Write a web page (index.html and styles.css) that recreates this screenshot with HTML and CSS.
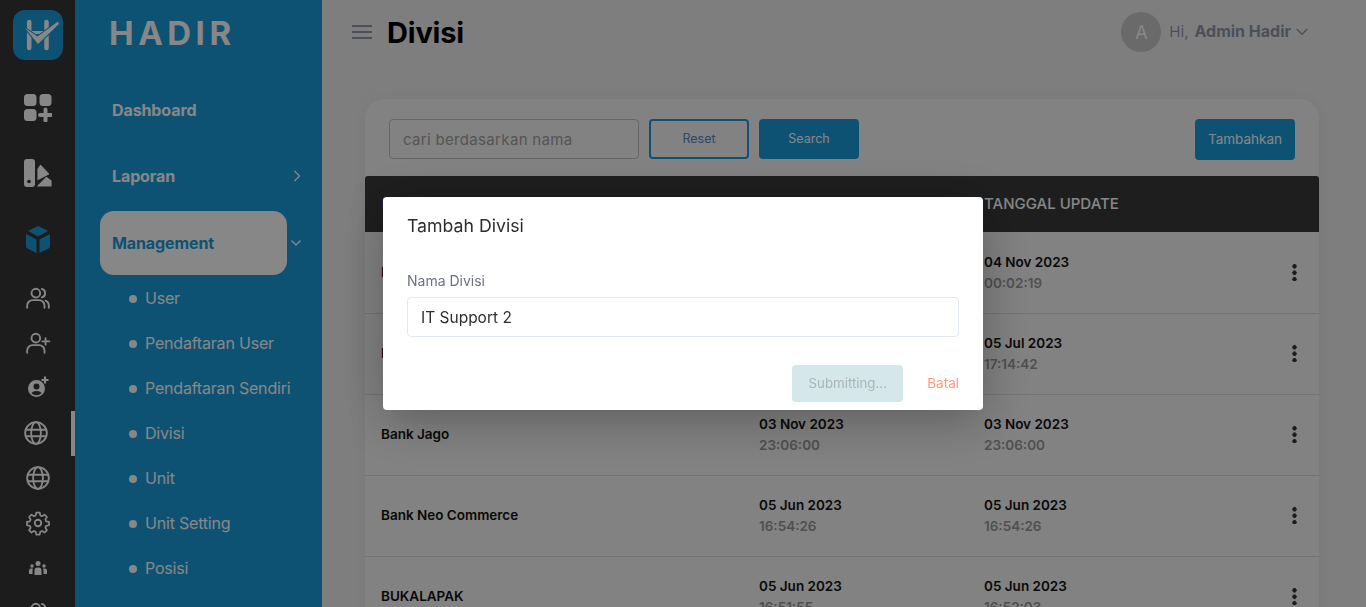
FILE: index.html
```html
<!DOCTYPE html>
<html lang="id">
<head>
<meta charset="utf-8">
<title>Divisi</title>
<link rel="stylesheet" href="styles.css">
</head>
<body>
<div class="app">
  <nav class="rail">
    <div class="rail-logo">
      <svg viewBox="0 0 50 50" width="50" height="50"><rect width="50" height="50" rx="12" fill="#1a9bd9"/><path d="M16.200 12v26M33.500 12v26" stroke="#fff" stroke-width="4.500" stroke-linecap="round" fill="none"/><path d="M17 22.500h16" stroke="#fff" stroke-width="3" fill="none"/><path d="M12 18l12.500 8.500L45 11.500l1 2.500L25 34z" fill="#fff" stroke="#1a9bd9" stroke-width="2" stroke-linejoin="round" paint-order="stroke"/></svg>
    </div>
    <a class="rail-item rail-big">
      <svg viewBox="0 0 28 28" width="28" height="28" fill="#fff"><rect x="0" y="0" width="12.500" height="12" rx="3.500"/><rect x="15.500" y="0" width="12" height="12" rx="3.500"/><rect x="0" y="15" width="12.500" height="12" rx="3.500"/><path d="M21.500 15.500v11M16 21h11" stroke="#fff" stroke-width="4" stroke-linecap="round"/></svg>
    </a>
    <a class="rail-item rail-big">
      <svg viewBox="0 0 28 28" width="28" height="28" fill="#fff"><path d="M3 0h5a3 3 0 0 1 3 3v22a3 3 0 0 1-3 3H3a3 3 0 0 1-3-3V3a3 3 0 0 1 3-3z"/><circle cx="5" cy="22.500" r="1.800" fill="#353535"/><path d="M14 10l2.500-3.500 8 8.500L14 20.500z" stroke="#fff" stroke-width="1.200" stroke-linejoin="round"/><path d="M14 27l8.500-8.500 4.500 3.500v5z" stroke="#fff" stroke-width="1.200" stroke-linejoin="round"/></svg>
    </a>
    <a class="rail-item rail-big">
      <svg viewBox="0 0 26 28" width="26" height="28" fill="#1a9bd9"><path d="M13 0l10 5-10 5.500L3 5z"/><path d="M1 8l10.500 5.500V27L2.500 22.500Q1 21.700 1 20z"/><path d="M25 8L14.500 13.500V27l9-4.500Q25 21.700 25 20z"/></svg>
    </a>
    <a class="rail-item rail-row">
      <svg class="ln" viewBox="0 0 24 24" width="26" height="26"><circle cx="10" cy="7.500" r="4"/><path d="M2 21v-2a5 5 0 0 1 5-5h6a5 5 0 0 1 5 5v2"/><path d="M15.500 3.600a4 4 0 0 1 0 7.800"/><path d="M22 21v-2a5 5 0 0 0-3-4.500"/></svg>
    </a>
    <a class="rail-item rail-row">
      <svg class="ln" viewBox="0 0 24 24" width="26" height="26"><circle cx="10" cy="7.500" r="4"/><path d="M2 21v-2a5 5 0 0 1 5-5h6a5 5 0 0 1 5 5v2"/><path d="M19 7.500v6M16 10.500h6.500"/></svg>
    </a>
    <a class="rail-item rail-row">
      <svg viewBox="0 0 24 24" width="24" height="24" fill="#fff"><path fill-rule="evenodd" d="M10.500 4a8.500 8.500 0 1 1 0 17 8.500 8.500 0 0 1 0-17zm0 3.500a3 3 0 1 0 0 6 3 3 0 0 0 0-6zm0 7.500c-2.300 0-4 .8-5 2a6.500 6.500 0 0 0 10 0c-1-1.200-2.700-2-5-2z"/><path d="M19 0.500v7M15.500 4h7" stroke="#fff" stroke-width="2.200"/></svg>
    </a>
    <a class="rail-item rail-row rail-active">
      <svg class="ln" viewBox="0 0 24 24" width="26" height="26"><circle cx="12" cy="12" r="10"/><ellipse cx="12" cy="12" rx="4.500" ry="10"/><path d="M2.500 9h19M2.500 15h19"/></svg>
    </a>
    <a class="rail-item rail-row">
      <svg class="ln" viewBox="0 0 24 24" width="26" height="26"><circle cx="12" cy="12" r="10"/><ellipse cx="12" cy="12" rx="4.500" ry="10"/><path d="M2.500 9h19M2.500 15h19"/></svg>
    </a>
    <a class="rail-item rail-row">
      <svg class="ln" viewBox="0 0 24 24" width="26" height="26"><circle cx="12" cy="12" r="3"/><path d="M10.300 2.500h3.400l.6 2.900 1.800.8 2.500-1.600 2.400 2.400-1.600 2.500.8 1.800 2.900.6v3.400l-2.900.6-.8 1.800 1.600 2.500-2.400 2.400-2.500-1.600-1.800.8-.6 2.900h-3.400l-.6-2.900-1.800-.8-2.500 1.600-2.400-2.400 1.600-2.500-.8-1.800-2.900-.6v-3.400l2.900-.6.8-1.800-1.600-2.500 2.400-2.400 2.500 1.600 1.800-.8z" transform="translate(12 12) scale(.92) translate(-12 -13)"/></svg>
    </a>
    <a class="rail-item rail-row">
      <svg viewBox="0 0 18 14" width="18" height="14" fill="#fff"><circle cx="9" cy="2.500" r="2.500"/><circle cx="3" cy="5" r="1.700"/><circle cx="15" cy="5" r="1.700"/><path d="M5.500 14V9.500a3 3 0 0 1 3-3h1a3 3 0 0 1 3 3V14z"/><path d="M0 13V9.500A2 2 0 0 1 2 7.500h2a4 4 0 0 0-.5 2V13zM18 13V9.500a2 2 0 0 0-2-2h-2a4 4 0 0 1 .5 2V13z"/></svg>
    </a>
    <a class="rail-item rail-row">
      <svg class="ln" viewBox="0 0 24 24" width="26" height="26"><circle cx="10" cy="7.500" r="4"/><path d="M2 21v-2a5 5 0 0 1 5-5h6a5 5 0 0 1 5 5v2"/><path d="M15.500 3.600a4 4 0 0 1 0 7.800"/></svg>
    </a>
    <span class="rail-thumb"></span>
  </nav>

  <aside class="side">
    <div class="brand">HADIR</div>
    <ul class="menu">
      <li class="menu-item">Dashboard</li>
      <li class="menu-item">Laporan
        <svg class="chev" viewBox="0 0 10 14" width="10" height="14"><path d="M2.500 2l5 5-5 5"/></svg>
      </li>
      <li class="menu-item menu-open">
        <span class="pill">Management</span>
        <svg class="chev" viewBox="0 0 12 10" width="12" height="10"><path d="M1.500 2.500l4.500 4.500 4.500-4.500"/></svg>
      </li>
    </ul>
    <ul class="sub">
      <li>User</li>
      <li>Pendaftaran User</li>
      <li>Pendaftaran Sendiri</li>
      <li>Divisi</li>
      <li>Unit</li>
      <li>Unit Setting</li>
      <li>Posisi</li>
    </ul>
  </aside>

  <main class="main">
    <header class="top">
      <button class="burger" aria-label="menu"><span></span><span></span><span></span></button>
      <h1 class="title">Divisi</h1>
      <div class="user">
        <span class="avatar">A</span>
        <span class="hi">Hi,</span>
        <strong class="uname">Admin Hadir</strong>
        <svg class="uchev" viewBox="0 0 12 8" width="12" height="8"><path d="M.7 1l5.300 5.300L11.300 1"/></svg>
      </div>
    </header>

    <section class="card">
      <div class="tools">
        <input class="search" type="text" placeholder="cari berdasarkan nama">
        <button class="btn btn-line">Reset</button>
        <button class="btn btn-fill">Search</button>
        <button class="btn btn-fill btn-add">Tambahkan</button>
      </div>
      <table class="tbl">
        <thead>
          <tr><th class="c1">NAMA DIVISI</th><th class="c2">TANGGAL DIBUAT</th><th class="c3">TANGGAL UPDATE</th><th class="c4"></th></tr>
        </thead>
        <tbody>
          <tr><td class="name">Bank Aladin</td><td><b>04 Nov 2023</b><i>00:02:19</i></td><td><b>04 Nov 2023</b><i>00:02:19</i></td><td class="more"><span class="dots"></span></td></tr>
          <tr><td class="name">Bank BCA</td><td><b>05 Jul 2023</b><i>17:14:42</i></td><td><b>05 Jul 2023</b><i>17:14:42</i></td><td class="more"><span class="dots"></span></td></tr>
          <tr><td class="name">Bank Jago</td><td><b>03 Nov 2023</b><i>23:06:00</i></td><td><b>03 Nov 2023</b><i>23:06:00</i></td><td class="more"><span class="dots"></span></td></tr>
          <tr><td class="name">Bank Neo Commerce</td><td><b>05 Jun 2023</b><i>16:54:26</i></td><td><b>05 Jun 2023</b><i>16:54:26</i></td><td class="more"><span class="dots"></span></td></tr>
          <tr><td class="name">BUKALAPAK</td><td><b>05 Jun 2023</b><i>16:51:55</i></td><td><b>05 Jun 2023</b><i>16:52:03</i></td><td class="more"><span class="dots"></span></td></tr>
        </tbody>
      </table>
    </section>
  </main>
</div>

<div class="overlay">
  <form class="modal">
    <h2 class="m-title">Tambah Divisi</h2>
    <label class="m-label" for="nama">Nama Divisi</label>
    <input class="m-input" id="nama" type="text" value="IT Support 2">
    <div class="m-actions">
      <button class="m-submit" type="button" disabled>Submitting...</button>
      <a class="m-cancel">Batal</a>
    </div>
  </form>
</div>
</body>
</html>
```
FILE: styles.css
```css
* { box-sizing: border-box; }
html, body { margin: 0; height: 100%; overflow: hidden; }
body { font-family: Inter, "Noto Sans", "Liberation Sans", sans-serif; background: #efefef; color: #111; }
ul { list-style: none; margin: 0; padding: 0; }

.app { display: flex; height: 607px; overflow: hidden; }

/* icon rail */
.rail { position: relative; flex: 0 0 75px; background: #353535; display: flex; flex-direction: column; align-items: center; overflow: hidden; padding-top: 10px; }
.rail-logo { height: 50px; flex: none; margin-bottom: 19px; margin-left: 1px; }
.rail-logo svg { display: block; }
.rail-item { display: flex; flex: none; align-items: center; justify-content: center; width: 100%; }
.rail-big { height: 66px; }
.rail-big svg { display: block; }
.rail-big:nth-of-type(1) { height: 57px; }
.rail-big:nth-of-type(2) { margin-top: 4px; }
.rail-big:nth-of-type(3) { margin-top: 1px; }
.rail-row { height: 45px; }
.rail-row:nth-of-type(4) { margin-top: 2px; }
.rail-active { padding-right: 4px; }
.ln { fill: none; stroke: #fff; stroke-width: 1.700; stroke-linecap: round; stroke-linejoin: round; display: block; }
.rail-thumb { position: absolute; right: 0; top: 411px; width: 4px; height: 45px; background: #fff; }

/* sidebar */
.side { flex: 0 0 247px; background: #1a9bd9; color: #fff; overflow: hidden; }
.brand { height: 77px; padding: 14px 0 0 34px; font-size: 33px; line-height: 38px; font-weight: 700; letter-spacing: 4.500px; }
.menu-item { position: relative; display: flex; align-items: center; height: 66px; padding-left: 37px; font-size: 16px; font-weight: 700; letter-spacing: -.1px; }
.menu-item .chev { position: absolute; right: 20px; top: 50%; transform: translateY(-50%); fill: none; stroke: #fff; stroke-width: 1.300; }
.menu-open { padding-left: 25px; margin-top: 1px; }
.pill { display: flex; align-items: center; width: 187px; height: 64px; padding-left: 12px; padding-bottom: 1px; border-radius: 14px; background: #fff; color: #1a9bd9; }
.sub { margin-top: -1px; }
.sub li { position: relative; display: flex; align-items: center; height: 45px; padding-left: 70px; font-size: 16px; font-weight: 400; letter-spacing: -.2px; color: #fff; }
.sub li::before { content: ""; position: absolute; left: 54px; top: 20px; width: 8px; height: 8px; border-radius: 50%; background: #fff; }

/* main */
.main { flex: 1; min-width: 0; background: #efefef; overflow: hidden; }
.top { display: flex; align-items: center; height: 64px; padding: 0 58px 0 30px; }
.burger { display: flex; flex-direction: column; justify-content: space-between; width: 20px; height: 14px; margin-right: 15px; padding: 0; border: 0; background: none; }
.burger span { display: block; height: 2px; background: #9096a8; }
.title { margin: 0; padding-top: 2px; font-size: 29px; line-height: 36px; font-weight: 700; letter-spacing: -.2px; color: #000; }
.user { display: flex; align-items: center; margin-left: auto; font-size: 15px; }
.avatar { display: flex; align-items: center; justify-content: center; width: 40px; height: 40px; border-radius: 50%; background: #c8c8c8; color: #fff; font-size: 18px; margin-right: 8px; }
.hi { color: #9096a8; margin: 0 6px 2px 0; }
.uname { color: #9096a8; font-size: 16px; font-weight: 700; margin-bottom: 2px; }
.uchev { fill: none; stroke: #9096a8; stroke-width: 1.300; margin-left: 5px; }

.card { margin: 35px 47px 0 43px; padding-top: 20px; background: #f6f6f6; border-radius: 20px 20px 0 0; box-shadow: 0 0 20px rgba(0,0,0,.05); }
.tools { display: flex; align-items: flex-start; gap: 10px; height: 57px; padding: 0 24px; }
.search { width: 250px; height: 40px; padding: 0 13px; border: 1px solid #c0c0c0; border-radius: 4px; background: #f6f6f6; font: 400 15px Inter, "Noto Sans", sans-serif; letter-spacing: .33px; outline: 0; }
.search::placeholder { color: #a0a0a0; }
.btn { width: 100px; height: 40px; border-radius: 4px; font: 400 12.500px Inter, "Noto Sans", sans-serif; padding: 0 0 2px; }
.btn-line { background: transparent; color: #4a8ac8; border: 2px solid #1a9bd9; }
.btn-fill { background: #1a9bd9; color: #fff; border: 0; }
.btn-add { margin-left: auto; height: 41px; font-size: 13.500px; }

.tbl { width: 954px; border-collapse: collapse; table-layout: fixed; }
.tbl th { height: 56px; padding: 0 0 2px; background: #3a3a3a; color: #fff; font-size: 15px; font-weight: 500; text-align: left; }
.tbl thead th:first-child { border-top-left-radius: 3px; padding-left: 17px; }
.tbl thead th:last-child { border-top-right-radius: 3px; }
.c1 { width: 394px; }
.c2 { width: 225px; }
.c3 { width: 270px; }
.tbl td { height: 81px; padding: 0; border-bottom: 1px solid #dcdcdc; font-size: 13.500px; vertical-align: middle; }
.tbl tbody tr:first-child td { padding-top: 2px; }
.tbl td.name { padding-left: 16px; padding-bottom: 2px; font-weight: 600; color: #111; }
.tbl td b { display: block; font-weight: 600; color: #111; line-height: 21px; }
.tbl td i { display: block; font-style: normal; font-weight: 600; color: #979797; line-height: 21px; }
.tbl td.more { text-align: right; padding: 2px 22px 0 0; }
.dots { display: inline-block; width: 5px; height: 18px; background: radial-gradient(circle at center, #333 2px, transparent 2.300px) 0 0 / 5px 6.500px repeat-y; }

/* modal */
.overlay { position: fixed; inset: 0; background: rgba(0,0,0,.47); display: flex; justify-content: center; align-items: flex-start; padding-top: 197px; }
.modal { width: 600px; height: 213px; padding: 18px 24px 0; background: #fff; border-radius: 4px; box-shadow: 0 10px 50px rgba(0,0,0,.3); display: flex; flex-direction: column; }
.m-title { margin: 0 0 35px; font-size: 17.700px; line-height: 22px; font-weight: 400; color: #2d2d2d; }
.m-label { font-size: 14px; line-height: 18px; color: #6b7280; margin-bottom: 7px; }
.m-input { height: 40px; flex: none; padding: 0 13px; border: 1px solid #e2e8f0; border-radius: 4px; font: 400 15.500px Inter, "Noto Sans", sans-serif; color: #2d2d2d; outline: 0; }
.m-actions { display: flex; justify-content: flex-end; align-items: center; gap: 24px; margin-top: 28px; }
.m-submit { width: 111px; height: 37px; padding: 0 0 1px; border: 0; border-radius: 4px; background: #d5e7ea; color: #a9b5b7; font: 400 13.300px Inter, "Noto Sans", sans-serif; }
.m-cancel { font-size: 13.500px; color: #ff9a7e; padding-bottom: 2px; }
```
